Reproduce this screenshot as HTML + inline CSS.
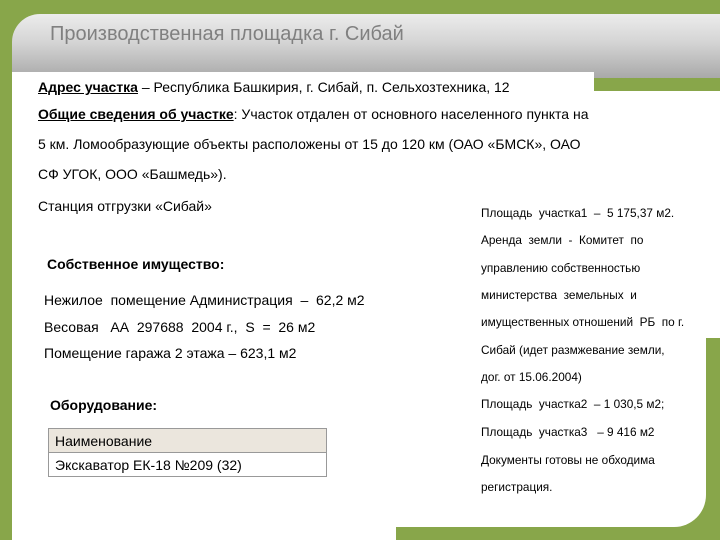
<!DOCTYPE html>
<html><head><meta charset="utf-8"><style>
body{margin:0;width:720px;height:540px;overflow:hidden;background:#88a64a;position:relative;font-family:"Liberation Sans",sans-serif;color:#000}
.a{position:absolute;white-space:nowrap}
.m{font-size:14px}
.r{font-size:11.8px;left:481px}
b u,u{text-decoration:underline}
</style></head><body>
<div class="a" style="left:12px;top:14px;width:708px;height:64px;border-top-left-radius:28px;background:linear-gradient(#ececec,#d4d4d4 45%,#a9a9a9)"></div>
<div class="a" style="left:12px;top:72px;width:582px;height:468px;background:#fff"></div>
<div class="a" style="left:396px;top:91px;width:310px;height:436px;background:#fff;border-bottom-right-radius:32px"></div>
<div class="a" style="left:706px;top:91px;width:14px;height:247px;background:#fff"></div>
<div class="a" style="left:594px;top:78px;width:126px;height:13px;background:#88a64a"></div>
<div class="a" style="left:396px;top:527px;width:324px;height:13px;background:#88a64a"></div>
<div class="a" style="left:50px;top:23px;font-size:20px;color:#808080">Производственная площадка г. Сибай</div>
<div class="a m" style="left:38px;top:79px"><b><u>Адрес участка</u></b> – Республика Башкирия, г. Сибай, п. Сельхозтехника, 12</div>
<div class="a m" style="left:38px;top:106px"><b><u>Общие сведения об участке</u></b>: Участок отдален от основного населенного пункта на</div>
<div class="a m" style="left:38px;top:136px">5 км. Ломообразующие объекты расположены от 15 до 120 км (ОАО «БМСК», ОАО</div>
<div class="a m" style="left:38px;top:166px">СФ УГОК, ООО «Башмедь»).</div>
<div class="a m" style="left:38px;top:198px">Станция отгрузки «Сибай»</div>
<div class="a m" style="left:47px;top:256px"><b>Собственное имущество:</b></div>
<div class="a m" style="left:44px;top:292px">Нежилое&nbsp; помещение Администрация&nbsp; –&nbsp; 62,2 м2</div>
<div class="a m" style="left:44px;top:319px">Весовая&nbsp;&nbsp; АА&nbsp; 297688&nbsp; 2004 г.,&nbsp; S&nbsp; =&nbsp; 26 м2</div>
<div class="a m" style="left:44px;top:345px">Помещение гаража 2 этажа – 623,1 м2</div>
<div class="a m" style="left:50px;top:397px"><b>Оборудование:</b></div>
<div class="a" style="left:48px;top:428px;width:277px;height:47px;border:1px solid #999;background:#fff"></div>
<div class="a" style="left:49px;top:429px;width:277px;height:23px;background:#ebe6dd;border-bottom:1px solid #999"></div>
<div class="a m" style="left:55px;top:433px">Наименование</div>
<div class="a m" style="left:55px;top:457px">Экскаватор ЕК-18 №209 (32)</div>
<div class="a r" style="top:206px">Площадь&nbsp; участка1&nbsp; –&nbsp; 5 175,37 м2.</div>
<div class="a r" style="top:233px">Аренда&nbsp; земли&nbsp; -&nbsp; Комитет&nbsp; по</div>
<div class="a r" style="top:261px">управлению собственностью</div>
<div class="a r" style="top:288px">министерства&nbsp; земельных&nbsp; и</div>
<div class="a r" style="top:315px">имущественных отношений&nbsp; РБ&nbsp; по г.</div>
<div class="a r" style="top:343px">Сибай (идет размжевание земли,</div>
<div class="a r" style="top:370px">дог. от 15.06.2004)</div>
<div class="a r" style="top:397px">Площадь&nbsp; участка2&nbsp; – 1 030,5 м2;</div>
<div class="a r" style="top:425px">Площадь&nbsp; участка3&nbsp;&nbsp; – 9 416 м2</div>
<div class="a r" style="top:453px">Документы готовы не обходима</div>
<div class="a r" style="top:480px">регистрация.</div>
</body></html>
